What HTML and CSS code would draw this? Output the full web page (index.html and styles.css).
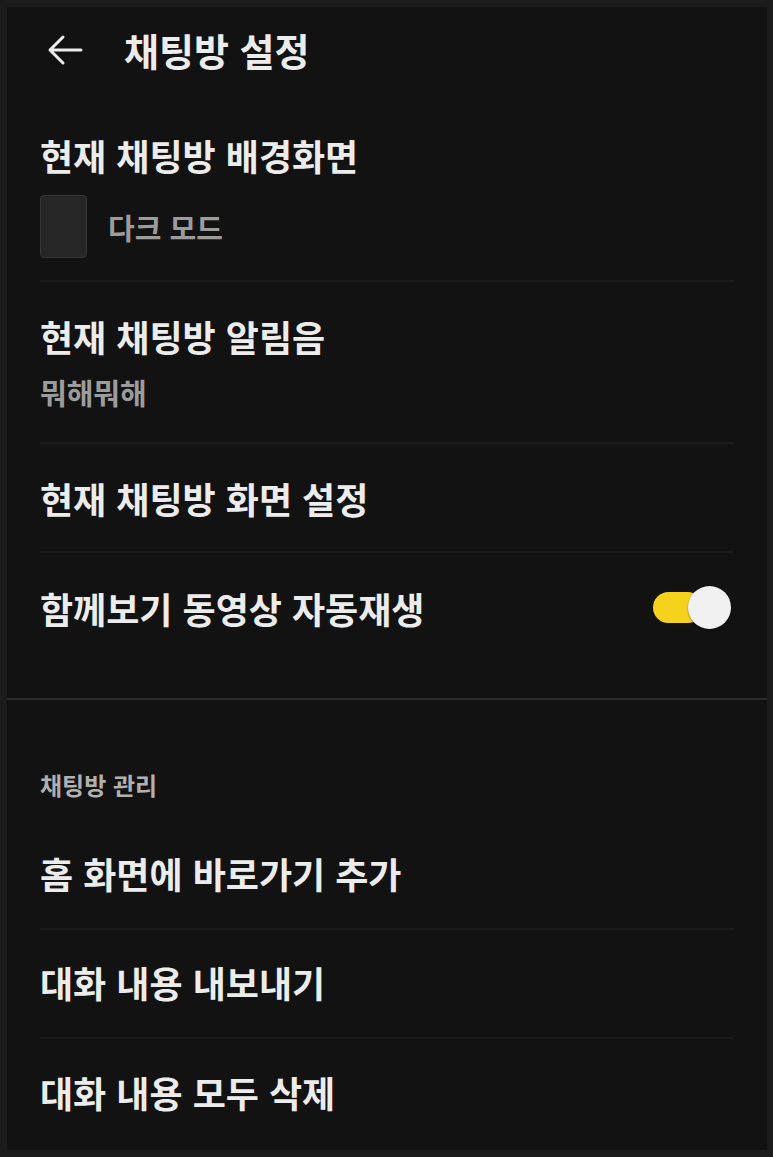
FILE: index.html
```html
<!DOCTYPE html>
<html lang="ko">
<head>
    <meta charset="UTF-8">
    <title>채팅방 설정</title>
    <link rel="stylesheet" href="styles.css">
</head>
<body>

<div class="screen">

    <!-- 상단 바 -->
    <div class="topbar">
        <svg class="back" width="36" height="32" viewBox="0 0 36 32">
            <path d="M34 16 H3 M16 3 L3 16 L16 29" fill="none" stroke="#ececec" stroke-width="3" stroke-linecap="round" stroke-linejoin="round"/>
        </svg>
        <h1>채팅방 설정</h1>
    </div>

    <div class="list">
        <div class="row row-wall">
            <div class="title">현재 채팅방 배경화면</div>
            <div class="wall">
                <div class="thumb"></div>
                <span class="sub">다크 모드</span>
            </div>
        </div>

        <div class="row row-two">
            <div class="title">현재 채팅방 알림음</div>
            <div class="sub sound">뭐해뭐해</div>
        </div>

        <div class="row">
            <div class="title">현재 채팅방 화면 설정</div>
        </div>

        <div class="row last">
            <div class="title">함께보기 동영상 자동재생</div>
            <div class="toggle on"><span class="knob"></span></div>
        </div>
    </div>

    <div class="section-line"></div>

    <!-- 채팅방 관리 -->
    <div class="list manage">
        <div class="section-title">채팅방 관리</div>

        <div class="row">
            <div class="title">홈 화면에 바로가기 추가</div>
        </div>
        <div class="row">
            <div class="title">대화 내용 내보내기</div>
        </div>
        <div class="row last">
            <div class="title">대화 내용 모두 삭제</div>
        </div>
    </div>

</div>

</body>
</html>
```

FILE: styles.css
```css
html, body { margin: 0; padding: 0; }
body { background: #1b1b1b; padding: 7px 6px 7px 7px; font-family: "Noto Sans CJK KR", "Noto Sans", sans-serif; color: #ececec; }
.screen { background: #121212; height: 1143px; overflow: hidden; }

.topbar { height: 86px; display: flex; align-items: center; padding-left: 40px; }
.topbar .back { margin-right: 41px; }
.topbar h1 { margin: 0; font-size: 38px; font-weight: 700; line-height: 46px; }

.list { padding: 0 33px; }
.row { display: flex; align-items: center; justify-content: space-between; height: 109px; border-bottom: 2px solid #1b1b1b; box-sizing: border-box; }
.row.last { border-bottom: none; }
.title { font-size: 36px; font-weight: 700; line-height: 44px; }
.sub { font-size: 29px; font-weight: 700; color: #9c9c9c; line-height: 36px; }

.row-wall { display: block; height: 189px; padding-top: 40px; }
.wall { display: flex; align-items: center; margin-top: 18px; }
.thumb { width: 45px; height: 61px; background: #262626; border: 1px solid #363636; border-radius: 4px; margin-right: 21px; }

.row-two { display: block; height: 162px; padding-top: 32px; }
.sound { margin-top: 16px; }

.toggle { position: relative; width: 50px; height: 31px; border-radius: 16px; background: #3a3a3a; }
.toggle.on { background: #f6d21c; margin-right: 31px; }
.toggle .knob { position: absolute; top: -6px; right: -28px; width: 43px; height: 43px; border-radius: 50%; background: #f1f1f1; box-shadow: 0 1px 2px rgba(0,0,0,0.4); }

.section-line { height: 2px; background: #2b2b2b; margin-top: 36px; }

.section-title { font-size: 24px; font-weight: 700; color: #b0b0b0; line-height: 32px; padding-top: 69px; padding-bottom: 20px; }
.manage .row { padding-bottom: 4px; }
```
